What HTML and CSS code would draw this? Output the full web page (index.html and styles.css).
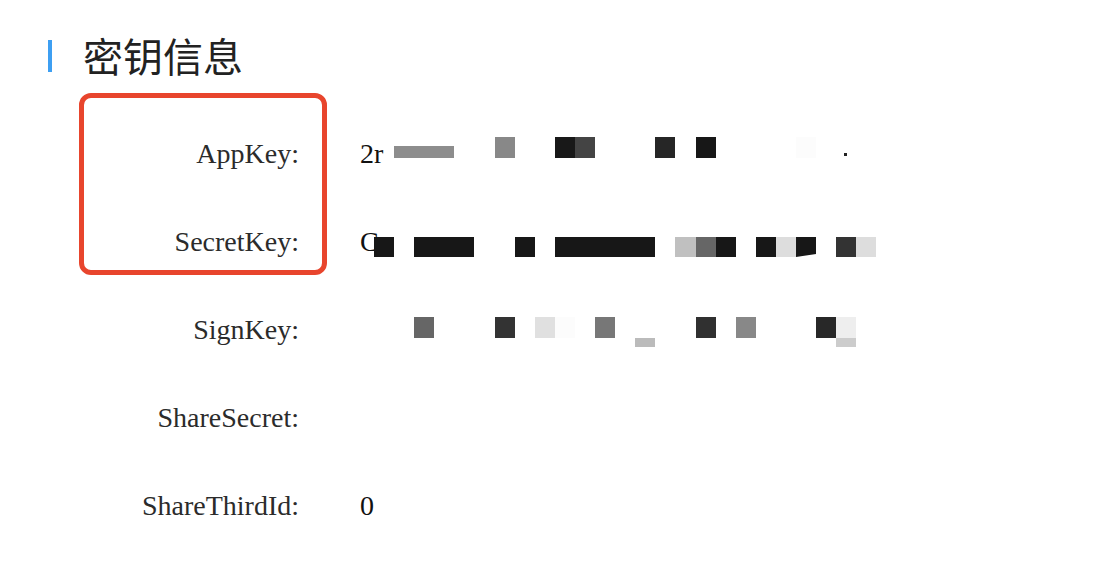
FILE: index.html
```html
<!DOCTYPE html>
<html lang="zh">
<head>
<meta charset="utf-8">
<title>密钥信息</title>
<link rel="stylesheet" href="styles.css">
</head>
<body>
<div class="page">
  <h2 class="title"><span class="title-bar"></span><span class="title-text">密钥信息</span></h2>
  <div class="fields">
    <div class="highlight"></div>
    <div class="row">
      <div class="label">AppKey:</div>
      <div class="value">2r
        <div class="mosaic m1">
          <span></span><span class="bar-gray"></span><span></span><span></span><span class="s88"></span><span></span><span></span><span class="s18"></span><span class="s44"></span><span></span><span></span><span></span><span class="s26"></span><span></span><span class="s17"></span><span></span><span></span><span></span><span></span><span class="sfc"></span><span></span><span class="dot"></span>
        </div>
      </div>
    </div>
    <div class="row">
      <div class="label">SecretKey:</div>
      <div class="value">C
        <div class="mosaic m2">
          <span class="s17"></span><span></span><span class="s17 w3"></span><span></span><span></span><span class="s17"></span><span></span><span class="s17 w5"></span><span></span><span class="sc0"></span><span class="s66"></span><span class="s17"></span><span></span><span class="s17"></span><span class="sdd"></span><span class="s17 slant"></span><span></span><span class="s33"></span><span class="sdd"></span>
        </div>
      </div>
    </div>
    <div class="row">
      <div class="label">SignKey:</div>
      <div class="value">
        <div class="mosaic m3">
          <span></span><span></span><span class="s66"></span><span></span><span></span><span></span><span class="s33"></span><span></span><span class="se0"></span><span class="sfc"></span><span></span><span class="s77"></span><span></span><span class="strip-bb"></span><span></span><span></span><span class="s30"></span><span></span><span class="s88"></span><span></span><span></span><span></span><span class="s28"></span><span class="see-cc"></span>
        </div>
      </div>
    </div>
    <div class="row">
      <div class="label">ShareSecret:</div>
      <div class="value"></div>
    </div>
    <div class="row">
      <div class="label">ShareThirdId:</div>
      <div class="value">0</div>
    </div>
  </div>
</div>
</body>
</html>
```
FILE: styles.css
```css
html, body {
  margin: 0;
  background: #ffffff;
}

.page {
  width: 1094px;
}

.title {
  display: flex;
  align-items: center;
  height: 40px;
  margin: 0;
  padding: 35px 0 0 48px;
  font: 400 40px/40px "Noto Sans CJK SC", sans-serif;
  color: #222222;
}

.title-bar {
  flex: none;
  width: 4px;
  height: 32px;
  margin: 2px 31px 0 0;
  background: #3d9ff2;
}

.fields {
  position: relative;
  margin-top: 35px;
  font: 28px/88px "Liberation Serif", "Times New Roman", serif;
}

.highlight {
  position: absolute;
  left: 79px;
  top: -17px;
  width: 238px;
  height: 172px;
  border: 5px solid #e8452d;
  border-radius: 12px;
}

.row {
  display: grid;
  grid-template-columns: 299px 1fr;
  column-gap: 61px;
  height: 88px;
}

.label {
  text-align: right;
  color: #2b2b2b;
  white-space: nowrap;
}

.value {
  position: relative;
  color: #111111;
}

.mosaic {
  position: absolute;
  left: 14px;
  display: flex;
  align-items: flex-start;
}

.mosaic span {
  flex: none;
  width: 20.1px;
  height: 21px;
}

.m1 { top: 27px; }
.m2 { top: 39px; }
.m2 span { height: 20px; }
.m3 { top: 31px; }

.mosaic .w3 { width: 60.3px; }
.mosaic .w5 { width: 100.5px; }

.mosaic .bar-gray {
  width: 60.3px;
  height: 12px;
  margin-top: 9px;
  background: #8d8d8d;
}

.mosaic .dot {
  width: 3px;
  height: 3px;
  margin: 16px 0 0 8px;
  background: #222222;
}

.mosaic .slant {
  clip-path: polygon(0 0, 100% 0, 100% 85%, 0 100%);
}

.mosaic .strip-bb {
  height: 9px;
  margin-top: 21px;
  background: #bbbbbb;
}

.mosaic .see-cc {
  background: #eeeeee;
  border-bottom: 9px solid #cccccc;
}

.s17 { background: #171717; }
.s18 { background: #181818; }
.s26 { background: #262626; }
.s28 { background: #282828; }
.s30 { background: #303030; }
.s33 { background: #333333; }
.s44 { background: #444444; }
.s66 { background: #666666; }
.s77 { background: #777777; }
.s88 { background: #888888; }
.sc0 { background: #c0c0c0; }
.sdd { background: #dddddd; }
.se0 { background: #e0e0e0; }
.sfc { background: #fcfcfc; }
```
